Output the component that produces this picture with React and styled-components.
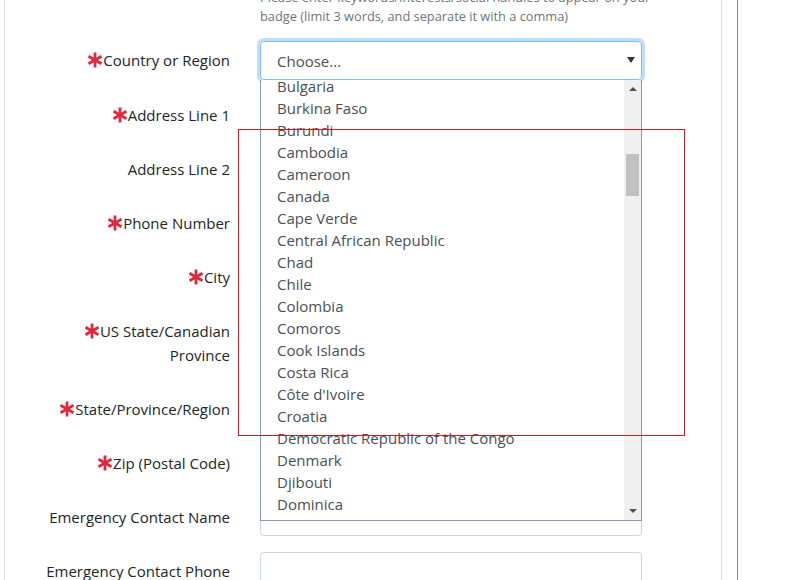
import React from 'react';
import styled, { createGlobalStyle } from 'styled-components';

const GlobalStyle = createGlobalStyle`
  html, body {
    margin: 0;
    padding: 0;
    background: #fff;
  }
  body {
    font-family: "Open Sans", "Noto Sans", sans-serif;
    color: #212529;
  }
`;

const countries = [
  'Bulgaria',
  'Burkina Faso',
  'Burundi',
  'Cambodia',
  'Cameroon',
  'Canada',
  'Cape Verde',
  'Central African Republic',
  'Chad',
  'Chile',
  'Colombia',
  'Comoros',
  'Cook Islands',
  'Costa Rica',
  "Côte d'Ivoire",
  'Croatia',
  'Democratic Republic of the Congo',
  'Denmark',
  'Djibouti',
  'Dominica',
  'Dominican Republic',
];

const fields = [
  { label: 'Address Line 1', required: true },
  { label: 'Address Line 2' },
  { label: 'Phone Number', required: true },
  { label: 'City', required: true },
  { label: ['US State/Canadian', 'Province'], required: true },
  { label: 'State/Province/Region', required: true },
  { label: 'Zip (Postal Code)', required: true },
  { label: 'Emergency Contact Name' },
  { label: 'Emergency Contact Phone' },
];

const Page = styled.div`
  position: relative;
  width: 795px;
  height: 580px;
  overflow: hidden;
  display: flex;
`;

const Card = styled.div`
  margin-left: 4px;
  width: 716px;
  border-left: 1px solid #dcdcdc;
  border-right: 1px solid #dcdcdc;
`;

const OuterEdge = styled.div`
  margin-left: 15px;
  width: 1px;
  background: #8c8c8c;
`;

const Form = styled.div`
  margin-top: -12px;
  display: flex;
  flex-direction: column;
`;

const Row = styled.div`
  display: grid;
  grid-template-columns: 225px 382px;
  column-gap: 30px;
  margin-bottom: 16px;
`;

const Label = styled.div`
  text-align: right;
  font-size: 15px;
  line-height: 24px;
  padding-top: 7px;
  padding-bottom: 7px;
  color: #212529;
`;

const Star = styled.svg`
  width: 16px;
  height: 16px;
  vertical-align: -2px;
`;

const Help = styled.div`
  grid-column: 2;
  font-size: 12.8px;
  line-height: 19px;
  color: #6c757d;
  white-space: nowrap;
  margin-bottom: -1px;
`;

const Input = styled.div`
  height: 38px;
  box-sizing: border-box;
  border: 1px solid #ced4da;
  border-radius: 4px;
  background: #fff;
`;

const SelectWrap = styled.div`
  position: relative;
`;

const Select = styled.div`
  height: 39px;
  box-sizing: border-box;
  border: 1px solid #80bdff;
  border-radius: 4px;
  box-shadow: 0 0 0 3px rgba(0, 123, 255, 0.25);
  display: flex;
  align-items: center;
  justify-content: space-between;
  padding: 0 6px 0 16px;
  font-size: 15px;
  color: #495057;
`;

const Caret = styled.span`
  width: 0;
  height: 0;
  border-left: 4px solid transparent;
  border-right: 4px solid transparent;
  border-top: 6px solid #333;
  margin-top: -2px;
`;

const ListBox = styled.div`
  position: absolute;
  top: 39px;
  left: 0;
  width: 382px;
  height: 441px;
  box-sizing: border-box;
  border: 1px solid #7f9db9;
  border-top: none;
  background: #fff;
  overflow: hidden;
  display: flex;
  z-index: 2;
`;

const Options = styled.div`
  flex: 1;
  margin-top: -5px;
  padding-left: 16px;
`;

const Option = styled.div`
  font-size: 15px;
  line-height: 22px;
  color: #495057;
  white-space: nowrap;
`;

const ScrollBar = styled.div`
  width: 17px;
  background: #f0f0f0;
  display: flex;
  flex-direction: column;
  align-items: center;
  justify-content: space-between;
  padding: 7px 0;
  box-sizing: border-box;
`;

const Arrow = styled.span`
  width: 0;
  height: 0;
  border-left: 4px solid transparent;
  border-right: 4px solid transparent;
  ${({ $up }) => ($up ? 'border-bottom: 4px solid #505050;' : 'border-top: 4px solid #505050;')}
`;

const Track = styled.div`
  flex: 1;
  width: 13px;
  margin: 5px 0;
`;

const Thumb = styled.div`
  margin-top: 58px;
  height: 42px;
  background: #c1c1c1;
`;

const Annotation = styled.div`
  position: absolute;
  left: 238px;
  top: 129px;
  width: 445px;
  height: 305px;
  border: 1px solid #c81e28;
  pointer-events: none;
  z-index: 3;
`;

function Asterisk() {
  return (
    <Star viewBox="0 0 16 16">
      <g stroke="#e0283c" strokeWidth="2.8" strokeLinecap="butt">
        <line x1="8" y1="0.5" x2="8" y2="15.5" />
        <line x1="1.5" y1="4.25" x2="14.5" y2="11.75" />
        <line x1="14.5" y1="4.25" x2="1.5" y2="11.75" />
      </g>
    </Star>
  );
}

function FieldLabel({ label, required }) {
  const lines = Array.isArray(label) ? label : [label];
  return (
    <Label>
      {lines.map((line, i) => (
        <div key={line}>
          {required && i === 0 && <Asterisk />}
          {line}
        </div>
      ))}
    </Label>
  );
}

export default function App() {
  return (
    <>
      <GlobalStyle />
      <Page>
        <Card>
          <Form>
            <Row>
              <Help>
                Please enter keywords/interests/social handles to appear on your
                <br />
                badge (limit 3 words, and separate it with a comma)
              </Help>
            </Row>
            <Row>
              <FieldLabel label="Country or Region" required />
              <SelectWrap>
                <Select>
                  Choose...
                  <Caret />
                </Select>
                <ListBox>
                  <Options>
                    {countries.map((c) => (
                      <Option key={c}>{c}</Option>
                    ))}
                  </Options>
                  <ScrollBar>
                    <Arrow $up />
                    <Track>
                      <Thumb />
                    </Track>
                    <Arrow />
                  </ScrollBar>
                </ListBox>
              </SelectWrap>
            </Row>
            {fields.map((f) => (
              <Row key={String(f.label)}>
                <FieldLabel label={f.label} required={f.required} />
                <Input />
              </Row>
            ))}
          </Form>
        </Card>
        <OuterEdge />
        <Annotation />
      </Page>
    </>
  );
}
